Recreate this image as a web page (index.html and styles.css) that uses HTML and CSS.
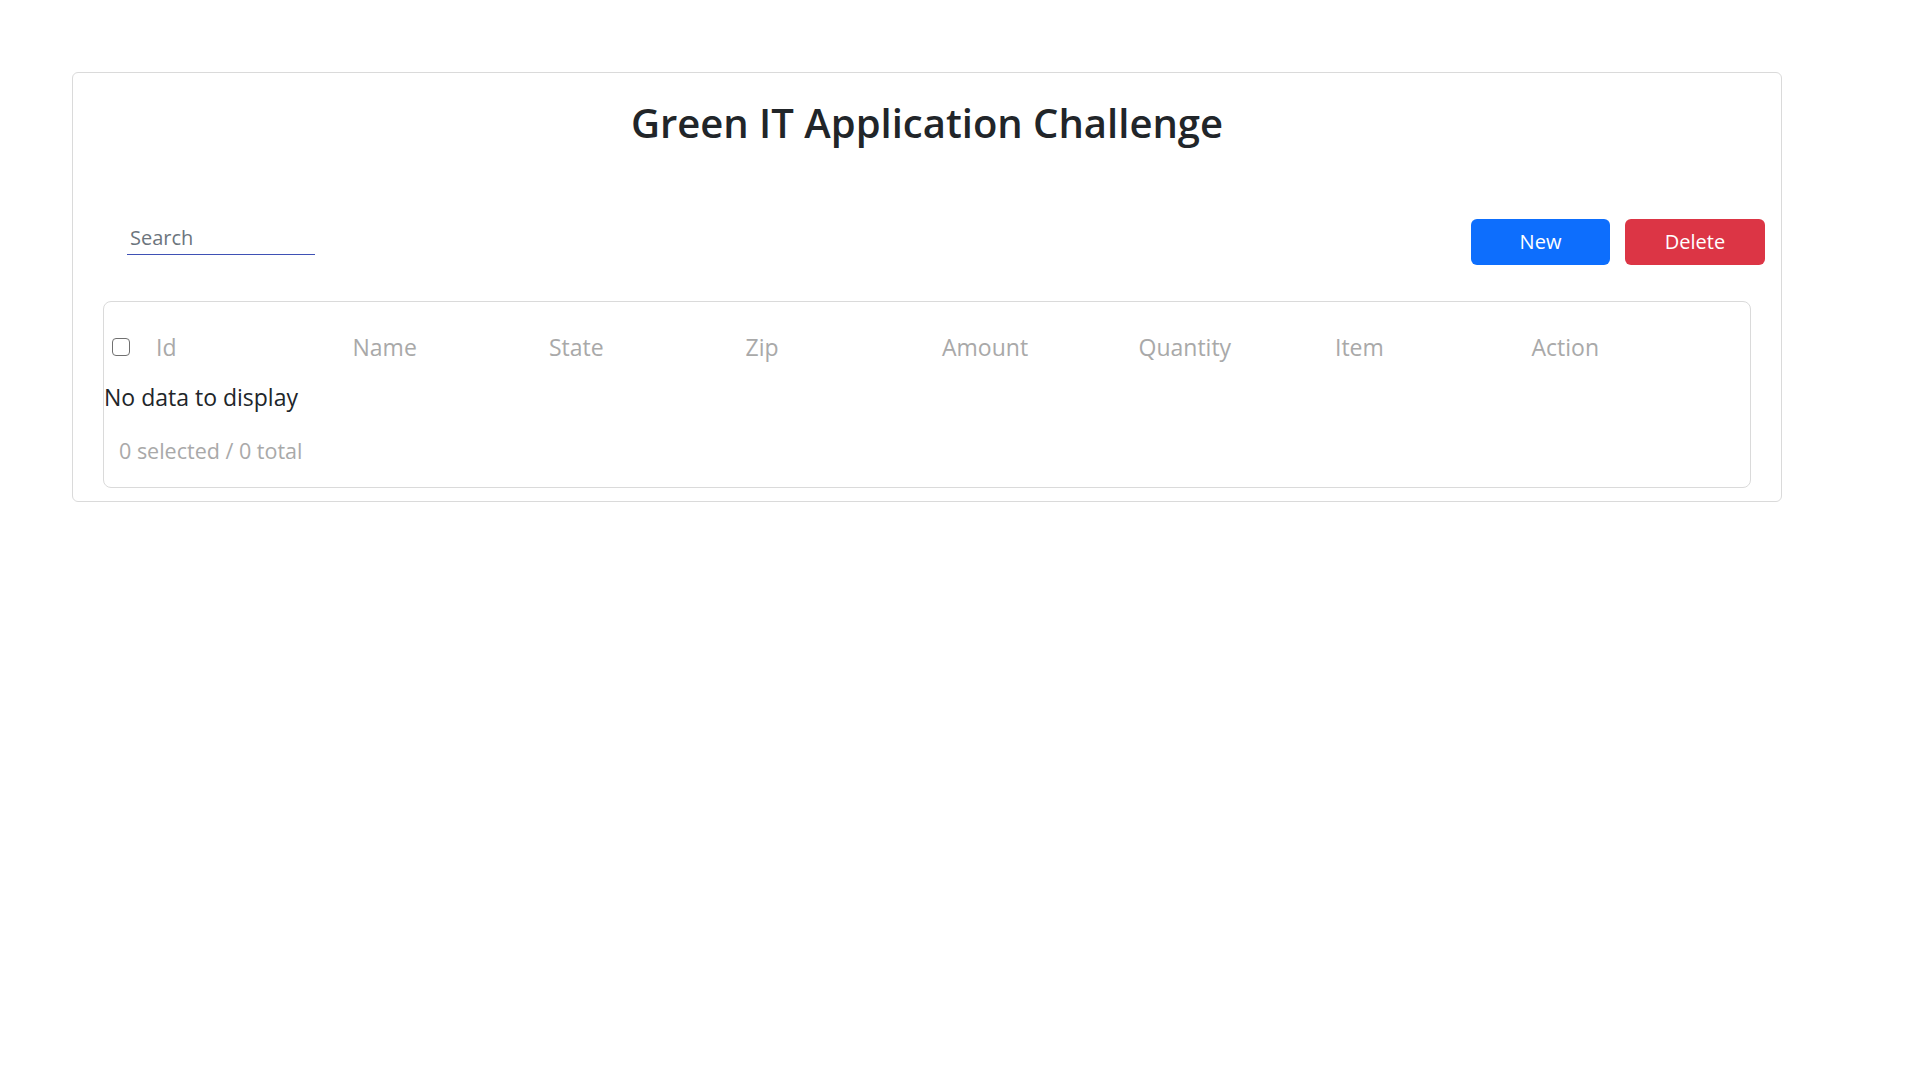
FILE: index.html
```html
<!DOCTYPE html>
<html lang="en">
<head>
<meta charset="utf-8">
<title>Green IT Application Challenge</title>
<link rel="stylesheet" href="styles.css">
</head>
<body>
<div class="card">
  <h1 class="title">Green IT Application Challenge</h1>
  <div class="toolbar">
    <input class="search" type="text" placeholder="Search">
    <div class="actions">
      <button class="btn btn-new">New</button>
      <button class="btn btn-delete">Delete</button>
    </div>
  </div>
  <div class="grid-card">
    <div class="grid-head">
      <span class="cell-check"><input class="check" type="checkbox"></span>
      <span class="col">Id</span>
      <span class="col">Name</span>
      <span class="col">State</span>
      <span class="col">Zip</span>
      <span class="col">Amount</span>
      <span class="col">Quantity</span>
      <span class="col">Item</span>
      <span class="col">Action</span>
    </div>
    <div class="empty">No data to display</div>
    <div class="summary">0 selected / 0 total</div>
  </div>
</div>
</body>
</html>
```
FILE: styles.css
```css
* { box-sizing: border-box; }
html, body { margin: 0; padding: 0; background: #fff; }
body {
  font-family: "Open Sans", "Noto Sans", sans-serif;
  color: #212529;
}
.card {
  margin: 72px 0 0 72px;
  width: 1710px;
  border: 1px solid #dadada;
  border-radius: 6px;
  padding: 26px 30px 13px 30px;
}
.title {
  margin: 0;
  font-size: 40px;
  line-height: 48px;
  font-weight: 600;
  text-align: center;
  letter-spacing: 0;
  color: #212529;
}
.toolbar {
  margin-top: 72px;
  margin-right: -14px;
  height: 46px;
  display: flex;
  justify-content: space-between;
  align-items: flex-start;
  padding-left: 24px;
}
.search {
  margin-top: 1px;
  width: 188px;
  height: 35px;
  border: none;
  border-bottom: 1px solid #3f51b5;
  outline: none;
  padding: 5px 3px 4px 3px;
  font-family: inherit;
  font-size: 20px;
  line-height: 24px;
  color: #212529;
  background: transparent;
}
.search::placeholder { color: #6c757d; }
.actions { display: flex; gap: 15px; }
.btn {
  width: 139px;
  height: 46px;
  border: none;
  border-radius: 6px;
  color: #fff;
  font-family: inherit;
  font-size: 20px;
  line-height: 24px;
  padding: 0;
  cursor: pointer;
}
.btn-new { background: #0d6efd; }
.btn-delete { background: #dc3545; width: 140px; }
.grid-card {
  margin-top: 36px;
  border: 1px solid #dadada;
  border-radius: 8px;
  padding: 29px 0 21px 0;
}
.grid-head {
  display: grid;
  grid-template-columns: 52px repeat(8, 196.5px);
  align-items: center;
  height: 32px;
  font-size: 23px;
  line-height: 32px;
  color: #a9a9a9;
}
.cell-check { display: flex; align-items: center; padding-left: 8px; }
.check {
  appearance: none;
  -webkit-appearance: none;
  margin: 0;
  width: 18px;
  height: 18px;
  border: 1.5px solid #707070;
  border-radius: 4px;
  background: #fff;
}
.empty {
  margin-top: 19px;
  font-size: 23px;
  line-height: 30px;
  color: #212529;
}
.summary {
  margin-top: 24px;
  padding-left: 15px;
  font-size: 21.5px;
  line-height: 30px;
  color: #a9a9a9;
}
```
